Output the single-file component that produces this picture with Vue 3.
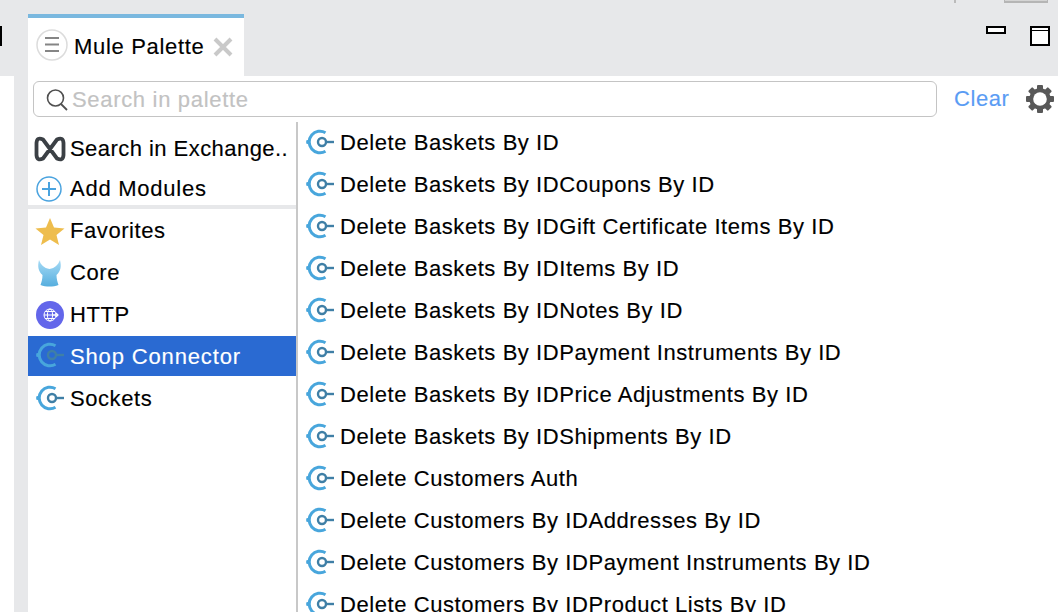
<template>
  <div class="screen">
    <header class="top">
      <div class="edge-mark"></div>
      <div class="tab">
        <span class="tab-menu">
          <svg width="32" height="32" viewBox="0 0 32 32">
            <circle cx="16" cy="16" r="15" fill="#fff" stroke="#dcdcdc" stroke-width="1.5" />
            <path d="M9 9h14M9 15.500h14M9 22h14" stroke="#858585" stroke-width="2" />
          </svg>
        </span>
        <span class="tab-title">Mule Palette</span>
        <svg class="tab-close" width="20" height="20" viewBox="0 0 20 20">
          <path d="M2 2l16 16M18 2L2 18" stroke="#c9c9c9" stroke-width="4" />
        </svg>
      </div>
      <div class="spacer"></div>
      <div class="window-btns">
        <svg width="20" height="8" viewBox="0 0 20 8">
          <rect x="1" y="1" width="18" height="6" fill="#fff" stroke="#000" stroke-width="2" />
        </svg>
        <svg width="20" height="20" viewBox="0 0 20 20">
          <rect x="1" y="1" width="18" height="18" fill="#fff" stroke="#000" stroke-width="2" />
          <path d="M1 4.500h18" stroke="#000" stroke-width="1" />
        </svg>
      </div>
      <i class="scrap-line"></i>
      <i class="scrap-box"></i>
    </header>

    <div class="body">
      <div class="strip"></div>
      <main class="palette">
        <div class="search-row">
          <div class="search">
            <svg width="24" height="24" viewBox="0 0 24 24">
              <circle cx="10.500" cy="10" r="8" fill="none" stroke="#505050" stroke-width="1.600" />
              <path d="M16 16l6 6" stroke="#505050" stroke-width="1.800" />
            </svg>
            <span class="placeholder">Search in palette</span>
          </div>
          <span class="clear">Clear</span>
          <svg class="gear" width="30" height="30" viewBox="0 0 30 30">
            <g fill="#585858">
              <rect v-for="a in gearAngles" :key="a" x="12" y="1" width="6" height="28" rx="1" :transform="`rotate(${a} 15 15)`" />
            </g>
            <circle cx="15" cy="15" r="8.500" fill="none" stroke="#585858" stroke-width="4.500" />
            <circle cx="15" cy="15" r="6.800" fill="#fff" />
          </svg>
        </div>

        <div class="columns">
          <aside class="cats">
            <div class="cat cat-top1">
              <svg class="ico ico-exchange" width="32" height="26" viewBox="0 0 32 26">
                <path d="M16 13L9 3.500Q3 .5 2.500 7v12q.5 6.500 6.500 3.500L16 13l7-9.500q6-3 6.500 3.500v12q-.5 6.500-6.500 3.500z" fill="none" stroke="#3b4045" stroke-width="3.800" stroke-linejoin="round" />
              </svg>
              <span>Search in Exchange..</span>
            </div>
            <div class="cat cat-top2">
              <svg class="ico" width="26" height="26" viewBox="0 0 26 26">
                <circle cx="13" cy="13" r="12" fill="#fff" stroke="#4aa3df" stroke-width="1.500" />
                <path d="M13 6v14M6 13h14" stroke="#4aa3df" stroke-width="2" />
              </svg>
              <span>Add Modules</span>
            </div>
            <div class="cat-sep"></div>
            <div class="cat">
              <svg class="ico ico-star" width="30" height="28" viewBox="0 0 30 28">
                <path d="M15 1l4 9.500 10.500 1-8 6.500 2.500 10L15 22.500 6 28l2.500-10-8-6.500 10.500-1z" fill="#eebd4d" />
              </svg>
              <span>Favorites</span>
            </div>
            <div class="cat">
              <svg class="ico" width="26" height="28" viewBox="0 0 26 28">
                <defs>
                  <linearGradient id="core-fill" x1="0" y1="0" x2="0" y2="1">
                    <stop offset="0" stop-color="#a5daf5" />
                    <stop offset="1" stop-color="#56aede" />
                  </linearGradient>
                </defs>
                <path d="M3 1C5 6 8 9 13.500 10 19 9 22 6 24 1c1.500 6 1 11-3.500 15 0 4 1 7 2 10-5.500 2-12.500 2-18 0 1-3 2-6 2-10C2 12 1.500 7 3 1z" fill="url(#core-fill)" />
              </svg>
              <span>Core</span>
            </div>
            <div class="cat">
              <svg class="ico" width="28" height="28" viewBox="0 0 28 28">
                <circle cx="14" cy="14" r="14" fill="#6366ea" />
                <g fill="none" stroke="#fff" stroke-width="1">
                  <circle cx="14" cy="14" r="6" />
                  <ellipse cx="14" cy="14" rx="2.600" ry="6" />
                  <path d="M8 14h12M9 10.500h10M9 17.500h10" />
                </g>
                <path d="M17 14h5M20 12l2 2-2 2" fill="none" stroke="#fff" stroke-width="1.200" />
              </svg>
              <span>HTTP</span>
            </div>
            <div class="cat active">
              <svg class="ico ico-conn" width="28" height="26" viewBox="0 0 28 26">
                <use href="#conn-shape" />
              </svg>
              <span>Shop Connector</span>
            </div>
            <div class="cat">
              <svg class="ico ico-conn" width="28" height="26" viewBox="0 0 28 26">
                <use href="#conn-shape" />
              </svg>
              <span>Sockets</span>
            </div>
          </aside>

          <section class="ops">
            <div v-for="op in ops" :key="op" class="op">
              <svg width="28" height="26" viewBox="0 0 28 26">
                <use href="#conn-shape" />
              </svg>
              <span>{{ op }}</span>
            </div>
          </section>
        </div>
      </main>
    </div>

    <svg width="0" height="0" class="defs">
      <defs>
        <g id="conn-shape">
          <path d="M19.500 3.700A10.800 10.800 0 1 0 19.500 22.300" fill="none" stroke="#48a6dc" stroke-width="3" />
          <path d="M3 10.500L.2 11.500v3L3 15.500z" fill="#48a6dc" />
          <circle cx="16" cy="13" r="4" fill="none" stroke="#3f7fa6" stroke-width="2.400" />
          <path d="M19.500 13h8.500" stroke="#3f7fa6" stroke-width="2.400" />
        </g>
      </defs>
    </svg>
  </div>
</template>

<script setup>
const gearAngles = [0, 45, 90, 135];

const ops = [
  'Delete Baskets By ID',
  'Delete Baskets By IDCoupons By ID',
  'Delete Baskets By IDGift Certificate Items By ID',
  'Delete Baskets By IDItems By ID',
  'Delete Baskets By IDNotes By ID',
  'Delete Baskets By IDPayment Instruments By ID',
  'Delete Baskets By IDPrice Adjustments By ID',
  'Delete Baskets By IDShipments By ID',
  'Delete Customers Auth',
  'Delete Customers By IDAddresses By ID',
  'Delete Customers By IDPayment Instruments By ID',
  'Delete Customers By IDProduct Lists By ID',
];
</script>

<style>
html, body {
  margin: 0;
  overflow: hidden;
}
</style>

<style scoped>
.screen {
  position: relative;
  width: 1058px;
  height: 612px;
  overflow: hidden;
  background: #e7e8ea;
  font-family: "Liberation Sans", Arial, sans-serif;
  font-size: 22px;
  letter-spacing: 0.57px;
  -webkit-text-stroke: 0.15px currentColor;
  color: #000;
}
.top {
  position: relative;
  display: flex;
  height: 76px;
  padding-left: 28px;
  box-sizing: border-box;
}
.edge-mark {
  position: absolute;
  left: 0;
  top: 26px;
  width: 2px;
  height: 20px;
  background: #000;
}
.tab {
  display: flex;
  align-items: center;
  width: 216px;
  height: 62px;
  margin-top: 14px;
  padding: 0 0 0 8px;
  box-sizing: border-box;
  border-top: 4px solid #7ab8df;
  background: #fff;
}
.tab-menu {
  display: flex;
  margin: 0 6px 4px 0;
}
.tab-title {
  white-space: nowrap;
  letter-spacing: 0.68px;
}
.tab-close {
  margin-left: 9px;
}
.spacer {
  flex: 1;
}
.window-btns {
  display: flex;
  align-items: flex-start;
  gap: 24px;
  padding: 26px 8px 0 0;
}
.scrap-line {
  position: absolute;
  left: 954px;
  top: 0;
  width: 2px;
  height: 3px;
  background: #bbb;
}
.scrap-box {
  position: absolute;
  left: 1004px;
  top: 0;
  width: 44px;
  height: 3px;
  box-sizing: border-box;
  border: solid #b5b5b5;
  border-width: 0 1px 2px;
  background: #d4d4d4;
}
.body {
  display: flex;
  height: 536px;
}
.strip {
  width: 14px;
  margin-right: 14px;
  background: #fff;
}
.palette {
  flex: 1;
  display: flex;
  flex-direction: column;
  background: #fff;
}
.search-row {
  display: flex;
  align-items: center;
  height: 46px;
  padding: 0 0 0 5px;
  box-sizing: border-box;
}
.search {
  display: flex;
  align-items: center;
  gap: 3px;
  width: 904px;
  height: 36px;
  margin-top: -1px;
  padding: 3px 0 0 11px;
  box-sizing: border-box;
  border: 1px solid #c4c4c4;
  border-radius: 6px;
}
.placeholder {
  color: #c2c2c2;
  letter-spacing: 0.68px;
}
.clear {
  margin-left: 17px;
  color: #5a9cf4;
}
.gear {
  margin-left: 16px;
}
.columns {
  flex: 1;
  display: flex;
  min-height: 0;
}
.cats {
  width: 268px;
  flex: none;
  padding-top: 7px;
  box-sizing: border-box;
}
.cat {
  display: flex;
  align-items: center;
  height: 42px;
  position: relative;
  padding-left: 42px;
  white-space: nowrap;
}
.cat-top1,
.cat-top2 {
  height: 40px;
}
.cat-top1 {
  letter-spacing: 0.45px;
}
.cat-top2 {
  letter-spacing: 0.75px;
}
.cat .ico {
  position: absolute;
  left: 8px;
  top: 50%;
  transform: translateY(-50%);
}
.cat .ico-exchange {
  left: 6px;
  filter: blur(0.4px);
}
.cat .ico-star {
  left: 7px;
  top: 49%;
}
.cat .ico-conn {
  left: 8px;
  margin-top: -1px;
}
.cat-sep {
  height: 4px;
  margin: -4px 0 1px;
  background: #e7e8ea;
}
.active {
  height: 40px;
  margin: 0 0 2px;
  padding-top: 2px;
  box-sizing: border-box;
  background: #2a6ad2;
  color: #fff;
  letter-spacing: 0.85px;
}
.ops {
  flex: 1;
  overflow: hidden;
  border-left: 2px solid #c8c8c8;
  padding-left: 8px;
}
.op {
  display: flex;
  align-items: center;
  gap: 6px;
  height: 42px;
  white-space: nowrap;
}
.op svg {
  margin-bottom: 3px;
}
.defs {
  position: absolute;
}
</style>
